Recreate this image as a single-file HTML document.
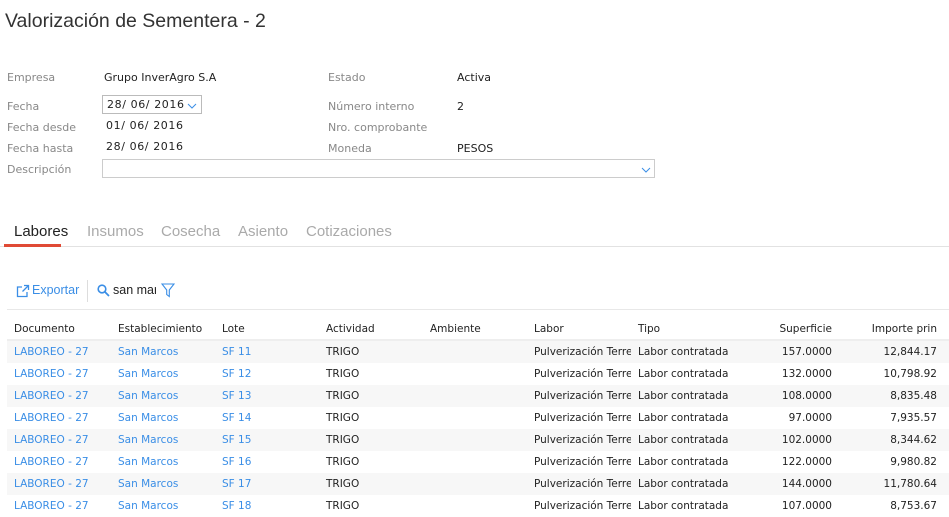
<!DOCTYPE html><html><head><style>
body{margin:0;width:949px;height:514px;overflow:hidden;background:#fff;font-family:"DejaVu Sans",Verdana,sans-serif;font-size:10.5px;color:#222}
.a{position:absolute;white-space:nowrap}
.f{font-size:11px}
.l{color:#888}
.t{font-family:"Liberation Sans",sans-serif;font-size:15px;color:#aaa}
.d{font-size:11px;letter-spacing:0.6px}
table{position:absolute;left:7px;top:318px;border-collapse:collapse;table-layout:fixed;width:942px}
td{height:22px;padding:0 0 0 7px;overflow:hidden;white-space:nowrap;font-size:10.5px}
th{height:21px;padding:0 0 0 7px;text-align:left;font-weight:normal;border-bottom:2px solid #eee;white-space:nowrap;overflow:hidden}
tr.g td{background:#f7f7f7}
.b{color:#3a8ee6}
.r{text-align:right;padding-right:12px}
.s{text-align:right;padding-right:7px}
</style></head><body>
<div class="a" style="left:5px;top:10px;font-family:'Liberation Sans',sans-serif;font-size:19.5px;color:#333">Valorización de Sementera - 2</div>
<div class="a l f" style="left:7px;top:71px">Empresa</div><div class="a f" style="left:104px;top:71px">Grupo InverAgro S.A</div>
<div class="a l f" style="left:328px;top:71px">Estado</div><div class="a f" style="left:457px;top:71px">Activa</div>
<div class="a l f" style="left:7px;top:100px">Fecha</div>
<div class="a" style="left:102px;top:95px;width:98px;height:17px;border:1px solid #bbb"><span class="d" style="position:absolute;left:4px;top:2px">28/ 06/ 2016</span><svg style="position:absolute;left:84px;top:7px" width="10" height="6"><path d="M1 1l4 4 4-4" fill="none" stroke="#3a8ee6"/></svg></div>
<div class="a l f" style="left:328px;top:100px">Número interno</div><div class="a f" style="left:457px;top:100px">2</div>
<div class="a l f" style="left:7px;top:121px">Fecha desde</div><div class="a d" style="left:106px;top:119px">01/ 06/ 2016</div>
<div class="a l f" style="left:328px;top:121px">Nro. comprobante</div>
<div class="a l f" style="left:7px;top:142px">Fecha hasta</div><div class="a d" style="left:106px;top:140px">28/ 06/ 2016</div>
<div class="a l f" style="left:328px;top:142px">Moneda</div><div class="a f" style="left:457px;top:142px">PESOS</div>
<div class="a l f" style="left:7px;top:163px">Descripción</div>
<div class="a" style="left:102px;top:159px;width:551px;height:17px;border:1px solid #ccc"><svg style="position:absolute;left:538px;top:7px" width="10" height="6"><path d="M1 1l4 4 4-4" fill="none" stroke="#3a8ee6"/></svg></div>
<div class="a t" style="left:14px;top:223px;color:#222">Labores</div>
<div class="a t" style="left:87px;top:223px">Insumos</div>
<div class="a t" style="left:161px;top:223px">Cosecha</div>
<div class="a t" style="left:238px;top:223px">Asiento</div>
<div class="a t" style="left:306px;top:223px">Cotizaciones</div>
<div class="a" style="left:0;top:246px;width:949px;height:1px;background:#e2e2e2"></div>
<div class="a" style="left:4px;top:244px;width:57px;height:3px;background:#e04a35"></div>
<svg class="a" style="left:16px;top:284px" width="15" height="14"><path d="M6 3H1.5v9.5H11V8M8 1.5h4.5V6M12.5 1.5L6.5 7.5" fill="none" stroke="#3a8ee6" stroke-width="1.3"/></svg>
<div class="a" style="left:32px;top:283px;font-family:'Liberation Sans',sans-serif;font-size:12.5px;color:#3a8ee6">Exportar</div>
<div class="a" style="left:87px;top:280px;width:1px;height:22px;background:#ddd"></div>
<svg class="a" style="left:97px;top:284px" width="13" height="13"><circle cx="5" cy="5" r="3.8" fill="none" stroke="#3a8ee6" stroke-width="1.6"/><path d="M8 8l4 4" stroke="#3a8ee6" stroke-width="1.8"/></svg>
<div class="a" style="left:113px;top:283px;font-family:'Liberation Sans',sans-serif;font-size:12.5px;width:43px;overflow:hidden">san mar</div>
<svg class="a" style="left:161px;top:283px" width="14" height="15"><path d="M1 1h12L8.3 7v6.5L5.7 11.5V7z" fill="none" stroke="#3a8ee6" stroke-width="1.1"/></svg>
<div class="a" style="left:7px;top:309px;width:942px;height:1px;background:#e8e8e8"></div>
<table>
<colgroup><col style="width:104px"><col style="width:104px"><col style="width:104px"><col style="width:104px"><col style="width:104px"><col style="width:104px"><col style="width:104px"><col style="width:104px"><col style="width:110px"></colgroup>
<tr><th>Documento</th><th>Establecimiento</th><th>Lote</th><th>Actividad</th><th>Ambiente</th><th>Labor</th><th>Tipo</th><th class="s">Superficie</th><th class="r" style="text-align:right">Importe prin</th></tr>
<tr class="g"><td class="b">LABOREO - 27</td><td class="b">San Marcos</td><td class="b">SF 11</td><td>TRIGO</td><td></td><td>Pulverización Terrestre</td><td>Labor contratada</td><td class="s">157.0000</td><td class="r">12,844.17</td></tr>
<tr><td class="b">LABOREO - 27</td><td class="b">San Marcos</td><td class="b">SF 12</td><td>TRIGO</td><td></td><td>Pulverización Terrestre</td><td>Labor contratada</td><td class="s">132.0000</td><td class="r">10,798.92</td></tr>
<tr class="g"><td class="b">LABOREO - 27</td><td class="b">San Marcos</td><td class="b">SF 13</td><td>TRIGO</td><td></td><td>Pulverización Terrestre</td><td>Labor contratada</td><td class="s">108.0000</td><td class="r">8,835.48</td></tr>
<tr><td class="b">LABOREO - 27</td><td class="b">San Marcos</td><td class="b">SF 14</td><td>TRIGO</td><td></td><td>Pulverización Terrestre</td><td>Labor contratada</td><td class="s">97.0000</td><td class="r">7,935.57</td></tr>
<tr class="g"><td class="b">LABOREO - 27</td><td class="b">San Marcos</td><td class="b">SF 15</td><td>TRIGO</td><td></td><td>Pulverización Terrestre</td><td>Labor contratada</td><td class="s">102.0000</td><td class="r">8,344.62</td></tr>
<tr><td class="b">LABOREO - 27</td><td class="b">San Marcos</td><td class="b">SF 16</td><td>TRIGO</td><td></td><td>Pulverización Terrestre</td><td>Labor contratada</td><td class="s">122.0000</td><td class="r">9,980.82</td></tr>
<tr class="g"><td class="b">LABOREO - 27</td><td class="b">San Marcos</td><td class="b">SF 17</td><td>TRIGO</td><td></td><td>Pulverización Terrestre</td><td>Labor contratada</td><td class="s">144.0000</td><td class="r">11,780.64</td></tr>
<tr><td class="b">LABOREO - 27</td><td class="b">San Marcos</td><td class="b">SF 18</td><td>TRIGO</td><td></td><td>Pulverización Terrestre</td><td>Labor contratada</td><td class="s">107.0000</td><td class="r">8,753.67</td></tr>
</table>
</body></html>
